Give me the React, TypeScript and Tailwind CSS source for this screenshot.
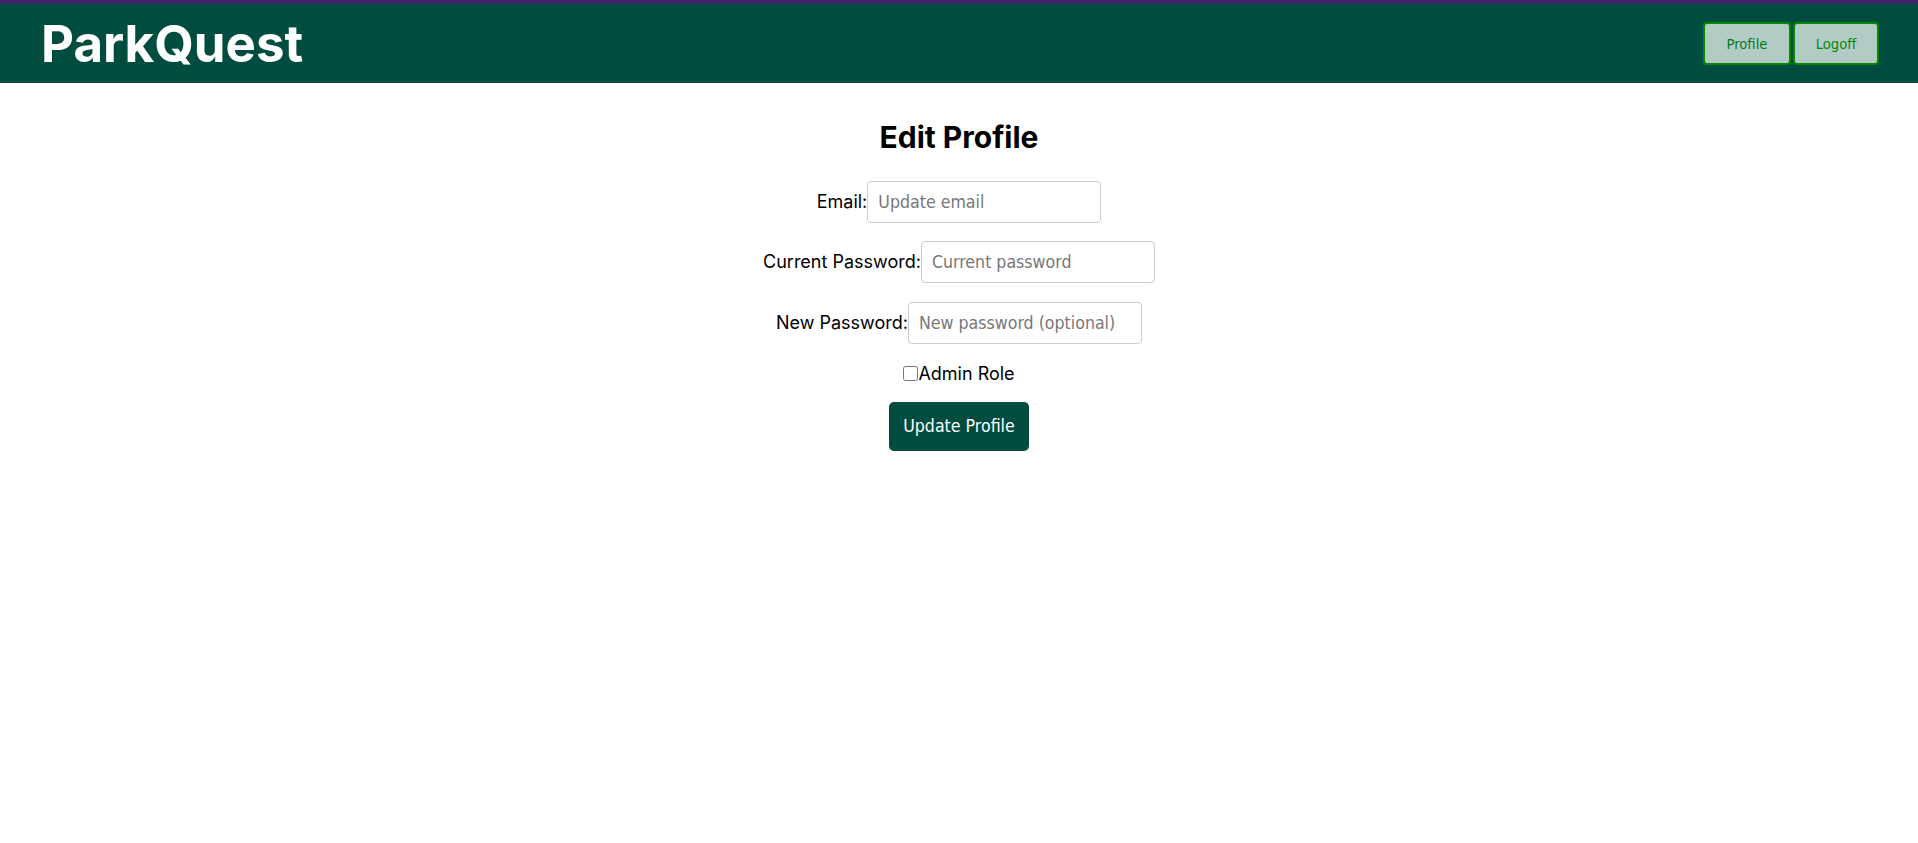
import React from "react";

const tahoma = { fontFamily: "'DejaVu Sans Condensed', 'DejaVu Sans', sans-serif", fontStretch: "condensed" as const };

export default function App() {
  return (
    <div className="min-h-[843px] bg-white" style={{ fontFamily: "Inter, 'Noto Sans', sans-serif" }}>
      <div className="h-[4px] bg-[#3d2469]" />
      <header className="flex h-[79px] items-center justify-between bg-[#004d40] pl-[41px] pr-[39px]">
        <h1 className="text-[51px] font-bold leading-none text-white" style={{ fontFamily: "Inter, sans-serif" }}>
          ParkQuest
        </h1>
        <div className="flex gap-[2px]">
          <button className="h-[43px] w-[88px] rounded-[4px] border-2 border-[#008a00] bg-[#b3cbc5] text-[14.67px] text-[#007a1a]" style={tahoma}>
            Profile
          </button>
          <button className="h-[43px] w-[86px] rounded-[4px] border-2 border-[#008a00] bg-[#b3cbc5] text-[14.67px] text-[#008a00]" style={tahoma}>
            Logoff
          </button>
        </div>
      </header>
      <main className="flex flex-col items-center pt-[35px] text-[18px] text-black">
        <h2 className="text-[30px] font-bold leading-[39px]">Edit Profile</h2>
        <form className="mt-[24px] flex flex-col items-center">
          <div className="flex items-baseline">
            <label>Email:</label>
            <input
              placeholder="Update email"
              className="h-[42px] w-[234px] rounded-[4px] border border-[#cccccc] px-[10px] text-[17.6px] placeholder:text-[#777]"
              style={tahoma}
            />
          </div>
          <div className="mt-[18px] flex items-baseline">
            <label>Current Password:</label>
            <input
              placeholder="Current password"
              type="password"
              className="h-[42px] w-[234px] rounded-[4px] border border-[#cccccc] px-[10px] text-[17.6px] placeholder:text-[#777]"
              style={tahoma}
            />
          </div>
          <div className="mt-[19px] flex items-baseline">
            <label>New Password:</label>
            <input
              placeholder="New password (optional)"
              type="password"
              className="h-[42px] w-[234px] rounded-[4px] border border-[#cccccc] px-[10px] text-[17.6px] placeholder:text-[#777]"
              style={tahoma}
            />
          </div>
          <label className="mt-[16px] flex items-center">
            <input type="checkbox" className="m-0 h-[15px] w-[15px]" />
            <span>Admin Role</span>
          </label>
          <button
            type="button"
            className="mt-[15px] h-[49px] w-[140px] rounded-[5px] bg-[#004d40] text-[17.6px] text-white"
            style={tahoma}
          >
            Update Profile
          </button>
        </form>
      </main>
    </div>
  );
}
